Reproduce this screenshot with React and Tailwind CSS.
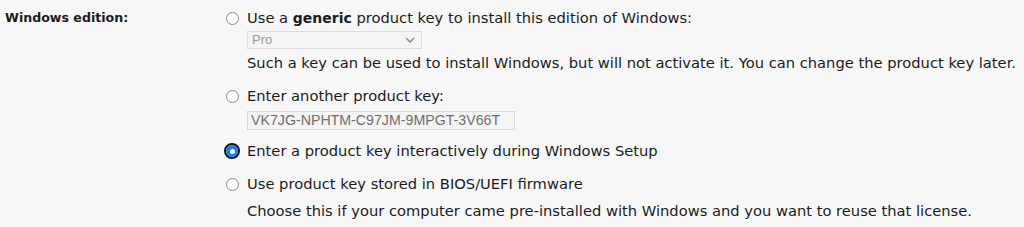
import React, { useState } from 'react';

function Radio({ checked, onClick }) {
  if (checked) {
    return (
      <button
        type="button"
        onClick={onClick}
        className="flex h-[16px] w-[16px] shrink-0 items-center justify-center rounded-full border-[2px] border-[#111] bg-white"
      >
        <span className="flex h-[12px] w-[12px] items-center justify-center rounded-full bg-[#1f7cf0]">
          <span className="h-[5px] w-[5px] rounded-full bg-white" />
        </span>
      </button>
    );
  }
  return (
    <button
      type="button"
      onClick={onClick}
      className="h-[13px] w-[13px] shrink-0 rounded-full border border-[#8a8a8a] bg-white"
    />
  );
}

export default function App() {
  const [choice, setChoice] = useState('interactive');

  return (
    <div className="h-[227px] w-[1024px] overflow-hidden bg-[#f7f7f7] text-[14.7px] text-[#1b1b1b] [font-family:'DejaVu_Sans',sans-serif]">
      <div className="flex pt-[6px]">
        {/* label column */}
        <div className="w-[226px] shrink-0 pl-[5px] text-[12.6px] leading-[24px] font-bold">Windows edition:</div>

        {/* options */}
        <div className="flex flex-col">
          <div className="flex h-[24px] items-center">
            <div className="flex w-[21px] items-center">
              <Radio checked={choice === 'generic'} onClick={() => setChoice('generic')} />
            </div>
            <span>
              Use a <b className="text-[14px]">generic</b> product key to install this edition of Windows:
            </span>
          </div>
          <div className="ml-[21px] mt-[1px] flex h-[18px] w-[175px] items-center justify-between border border-[#dcdcdc] bg-[#f4f4f4] pl-[4px] pr-[6px] text-[13px] text-[#9a9a9a] [font-family:'Liberation_Sans',sans-serif]">
            <span>Pro</span>
            <svg width="10" height="6" viewBox="0 0 10 6" fill="none" stroke="#888" strokeWidth="1.4">
              <path d="M1 1l4 4 4-4" />
            </svg>
          </div>
          <div className="ml-[21px] mt-[2px] leading-[24px]">
            Such a key can be used to install Windows, but will not activate it. You can change the product key later.
          </div>

          <div className="mt-[9px] flex h-[24px] items-center">
            <div className="flex w-[21px] items-center">
              <Radio checked={choice === 'another'} onClick={() => setChoice('another')} />
            </div>
            <span>Enter another product key:</span>
          </div>
          <div className="ml-[21px] mt-[3px] flex h-[19px] w-[268px] items-center border border-[#d8d8d8] bg-[#f4f4f4] pl-[3px] text-[14.2px] text-[#6f6f6f] [font-family:'Liberation_Sans',sans-serif]">
            VK7JG-NPHTM-C97JM-9MPGT-3V66T
          </div>

          <div className="mt-[9px] flex h-[24px] items-center">
            <div className="-ml-[2px] flex w-[23px] items-center">
              <Radio checked={choice === 'interactive'} onClick={() => setChoice('interactive')} />
            </div>
            <span>Enter a product key interactively during Windows Setup</span>
          </div>

          <div className="mt-[9px] flex h-[24px] items-center">
            <div className="flex w-[21px] items-center">
              <Radio checked={choice === 'bios'} onClick={() => setChoice('bios')} />
            </div>
            <span>Use product key stored in BIOS/UEFI firmware</span>
          </div>
          <div className="ml-[21px] mt-[3px] leading-[24px]">
            Choose this if your computer came pre-installed with Windows and you want to reuse that license.
          </div>
        </div>
      </div>
    </div>
  );
}
